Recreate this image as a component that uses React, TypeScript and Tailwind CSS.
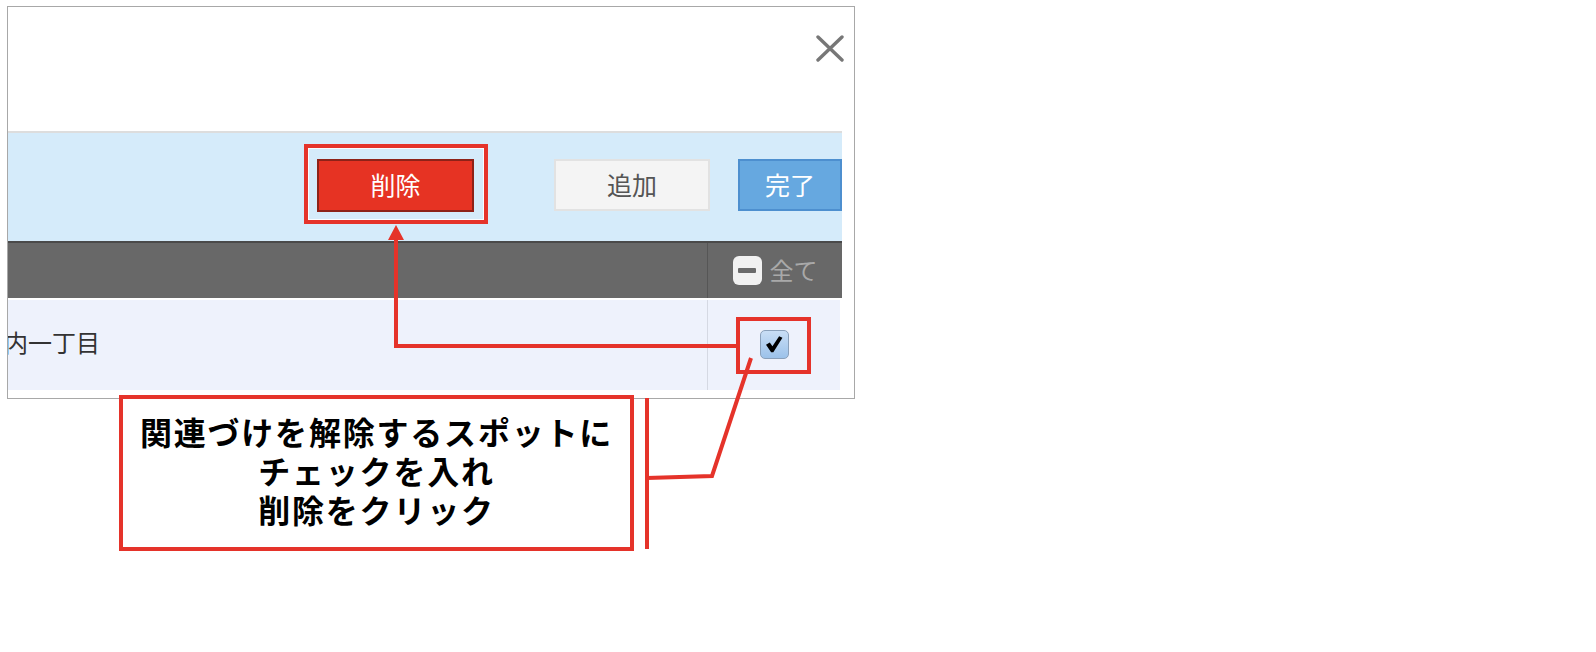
import React from "react";

const RED = "#e5332a";

function CloseIcon() {
  return (
    <svg width="28" height="27" viewBox="0 0 28 27" className="block">
      <path d="M2 2 L26 25 M26 2 L2 25" stroke="#777" strokeWidth="3.4" strokeLinecap="round" fill="none" />
    </svg>
  );
}

function CheckMark() {
  return (
    <svg width="20" height="20" viewBox="0 0 18 18" className="block">
      <path d="M1.8 9.6 L5.2 7.6 L7.6 11 L13.6 2 L16.6 3.4 L8.4 16.4 L6.4 16.4 Z" fill="#000" />
    </svg>
  );
}

function Annotations() {
  return (
    <svg
      width="1596"
      height="652"
      viewBox="0 0 1596 652"
      className="absolute left-0 top-0 pointer-events-none"
    >
      {/* elbow arrow from the row checkbox up to the delete button */}
      <polyline points="736,346 396,346 396,238" fill="none" stroke={RED} strokeWidth="4" />
      <polygon points="396,225 388,240 404,240" fill={RED} />
      {/* bracket beside the callout and its leader line */}
      <line x1="647" y1="398" x2="647" y2="549" stroke={RED} strokeWidth="4" />
      <polyline points="647,478 712,476 751,358" fill="none" stroke={RED} strokeWidth="4" />
    </svg>
  );
}

export default function App() {
  return (
    <div
      className="relative w-[1596px] h-[652px] bg-white overflow-hidden"
      style={{ fontFamily: '"Noto Sans CJK JP", "Noto Sans", sans-serif' }}
    >
      <div className="ml-[7px] pt-[6px]">
        <div className="w-[848px] h-[393px] border border-[#a8a8a8] bg-white flex flex-col overflow-hidden">
          {/* title area */}
          <div className="h-[124px] flex justify-end items-start pt-[28px] pr-[10px]">
            <CloseIcon />
          </div>

          {/* toolbar */}
          <div className="mr-[12px] h-[110px] border-t-2 border-[#dddddd] bg-[#d5ebfa] flex justify-end items-start pt-[26px]">
            <button className="w-[157px] h-[53px] bg-[#e63323] border-2 border-[#8e2218] text-white text-[25px] leading-none pb-[2px]">
              削除
            </button>
            <button className="ml-[80px] w-[156px] h-[52px] bg-[#f4f4f4] border-2 border-[#e2e2e2] text-[#555] text-[25px] leading-none pb-[2px]">
              追加
            </button>
            <button className="ml-[28px] w-[104px] h-[52px] bg-[#66a8e0] border-2 border-[#4d8fcf] text-white text-[25px] leading-none pb-[2px]">
              完了
            </button>
          </div>

          {/* table header */}
          <div className="mr-[12px] h-[57px] border-t-2 border-[#4a4a4a] bg-[#686868] flex">
            <div className="flex-1" />
            <div className="w-[135px] border-l border-[#565656] flex items-center justify-center gap-[8px]">
              <div className="w-[29px] h-[29px] rounded-[6px] bg-[#f1f1f1] flex items-center justify-center">
                <div className="w-[18px] h-[5px] rounded-[1px] bg-[#6a6a6a]" />
              </div>
              <span className="text-[24px] text-[#a9a9a9] leading-none pb-[2px]">全て</span>
            </div>
          </div>

          {/* table row */}
          <div className="mr-[14px] mt-[2px] h-[90px] bg-[#eef2fc] flex">
            <div className="flex-1 overflow-hidden flex items-center pb-[6px]">
              <span className="-ml-[52px] text-[24px] text-[#333] leading-none whitespace-nowrap">
                丸の内一丁目
              </span>
            </div>
            <div className="w-[133px] border-l border-[#d5d9e3] flex items-center justify-center pb-[2px]">
              <div className="w-[29px] h-[29px] rounded-[5px] border border-[#8aa0ba] bg-[linear-gradient(#c9def5,#9cc2ea)] flex items-center justify-center">
                <CheckMark />
              </div>
            </div>
          </div>
        </div>
      </div>

      <Annotations />

      {/* highlight around the delete button */}
      <div className="absolute left-[304px] top-[144px] w-[184px] h-[80px] border-4 border-[#e5332a] shadow-[inset_0_0_0_1px_rgba(255,255,255,0.85)] pointer-events-none" />

      {/* highlight around the row checkbox */}
      <div className="absolute left-[736px] top-[317px] w-[75px] h-[57px] border-4 border-[#e5332a] pointer-events-none" />

      {/* callout */}
      <div className="absolute left-[119px] top-[395px] w-[515px] h-[156px] border-4 border-[#e5332a] bg-white flex flex-col items-center justify-center pb-[6px]">
        <p className="text-[32px] font-bold leading-[39px] tracking-[1.8px] text-black text-center">
          関連づけを解除するスポットに
          <br />
          チェックを入れ
          <br />
          削除をクリック
        </p>
      </div>
    </div>
  );
}
